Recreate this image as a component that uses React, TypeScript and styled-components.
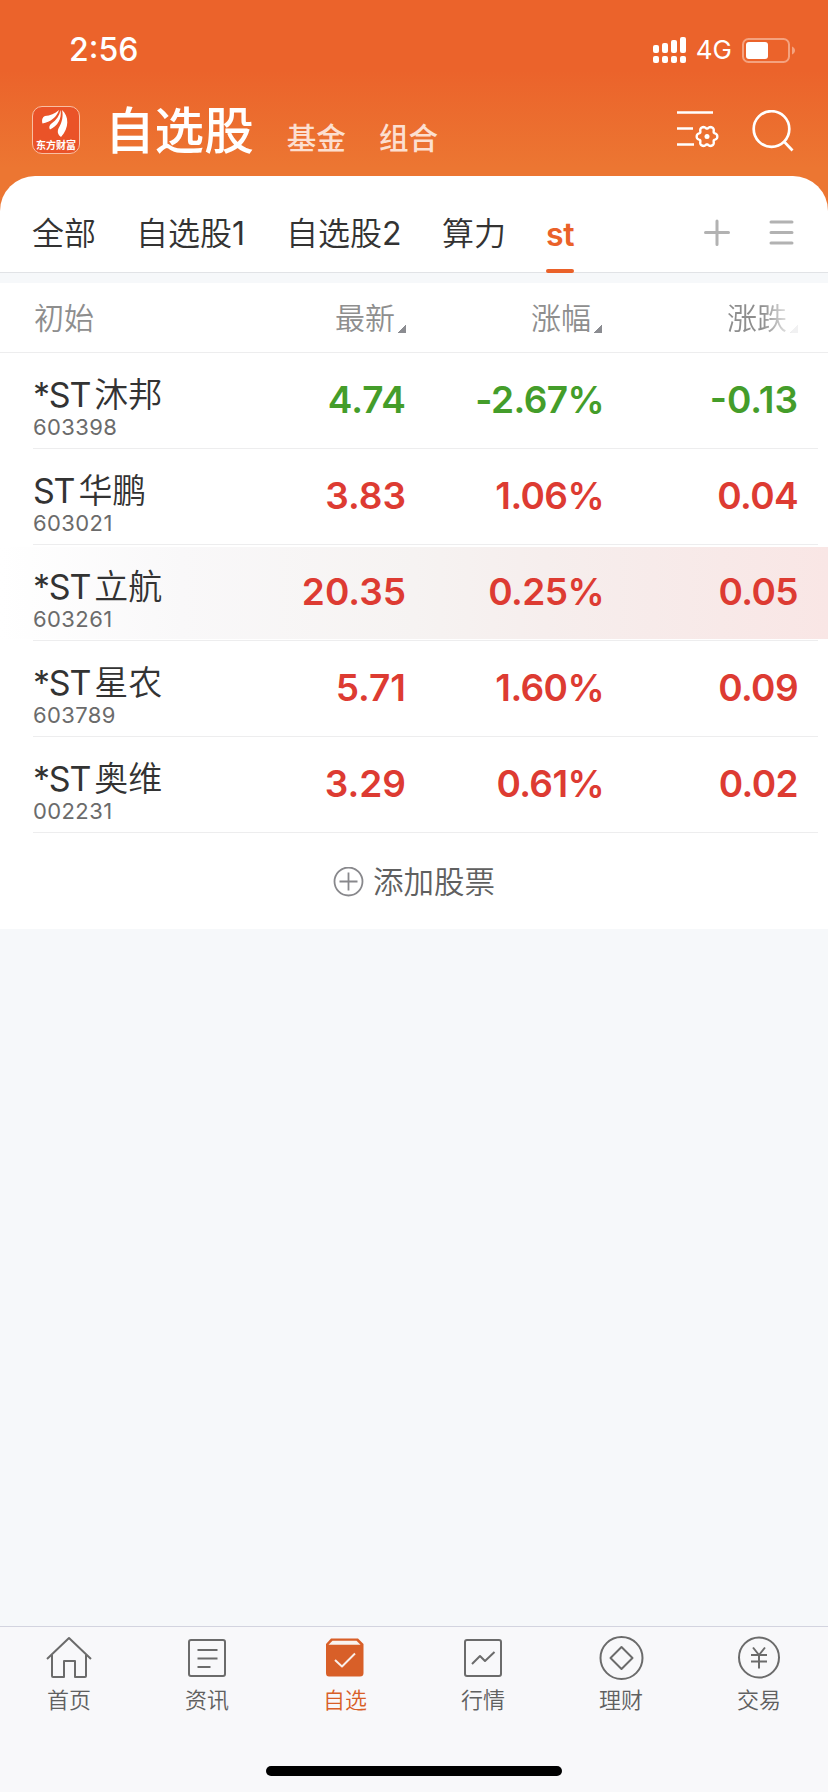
import React from "react";
import styled, { createGlobalStyle } from "styled-components";

const ORANGE = "#ea6129";
const RED = "#dd3b32";
const GREEN = "#449d2a";

const Global = createGlobalStyle`
  * { box-sizing: border-box; }
  body {
    margin: 0;
    background: #f6f7f9;
    font-family: Inter, "Noto Sans CJK SC", sans-serif;
    color: #333;
  }
  svg { display: block; flex: none; }
`;

const Screen = styled.div`
  width: 828px;
  height: 1792px;
  display: flex;
  flex-direction: column;
  background: #f6f8fa;
  overflow: hidden;
`;

const Top = styled.header`
  background: linear-gradient(#eb632b 0, #eb632b 70px, #ec7632 168px, #ec7632 100%);
`;

const StatusBar = styled.div`
  height: 98px;
  padding: 2px 33px 0 69px;
  display: flex;
  align-items: center;
  color: #fff;
`;

const Clock = styled.span`
  flex: 1;
  font-size: 32px;
  line-height: 40px;
  font-weight: 550;
`;

const Network = styled.span`
  margin: 0 10px 0 9px;
  font-size: 26px;
  line-height: 32px;
`;

const TitleBar = styled.div`
  height: 78px;
  padding: 0 33px 0 32px;
  display: flex;
  align-items: flex-start;
`;

const LogoBox = styled.div`
  width: 48px;
  height: 48px;
  margin-top: 8px;
  border: 1px solid #f9bfa3;
  border-radius: 10px;
  background: #ea5328;
  display: flex;
  flex-direction: column;
  align-items: center;
  overflow: hidden;
`;

const LogoText = styled.span`
  color: #fff;
  font: 600 10px/14px "Noto Sans CJK SC", sans-serif;
  white-space: nowrap;
`;

const Title = styled.h1`
  margin: -7px 0 0 25px;
  font-family: "Noto Sans CJK SC", sans-serif;
  font-size: 49.6px;
  line-height: 72px;
  font-weight: 500;
  color: #fff;
  white-space: nowrap;
`;

const TopLink = styled.span<{ $gap: number }>`
  margin: 17px 0 0 ${(p) => p.$gap}px;
  font-family: "Noto Sans CJK SC", sans-serif;
  font-size: 29.6px;
  line-height: 44px;
  color: #fcdfd0;
  font-weight: 500;
`;

const TopIcons = styled.div`
  margin: 12px 0 0 auto;
  display: flex;
  gap: 32px;
`;

const Tabs = styled.nav`
  height: 97px;
  padding: 0 34px 0 32px;
  border-bottom: 1px solid #e1e3e6;
  border-radius: 35px 35px 0 0;
  background: #fff;
  display: flex;
`;

const Tab = styled.span<{ $active?: boolean; $width: number }>`
  width: ${(p) => p.$width}px;
  height: 97px;
  padding-top: ${(p) => (p.$active ? 36 : 35)}px;
  position: relative;
  font-size: 32px;
  line-height: 46px;
  white-space: nowrap;
  color: ${(p) => (p.$active ? ORANGE : "#333")};
  font-weight: ${(p) => (p.$active ? 600 : 350)};
  letter-spacing: ${(p) => (p.$active ? "-0.4px" : "0")};
`;

const Digit = styled.span`
  font-weight: 400;
`;

const Underline = styled.i`
  position: absolute;
  left: 0;
  bottom: 0;
  width: 28px;
  height: 4px;
  border-radius: 2px;
  background: ${ORANGE};
`;

const TabIcons = styled.div`
  margin: 43px 0 0 auto;
  display: flex;
  gap: 38px;
`;

const Table = styled.section`
  margin-top: 10px;
  background: #fff;
`;

const GRID = "1fr 196px 196px";

const HeadRow = styled.div`
  height: 70px;
  padding: 0 30px 0 34px;
  border-bottom: 1px solid #ededee;
  display: grid;
  grid-template-columns: ${GRID};
  color: #8e8e8e;
  font-size: 30px;
  font-weight: 350;
  line-height: 70px;
`;

const HeadCell = styled.span<{ $fade?: boolean }>`
  display: flex;
  justify-content: flex-end;
  ${(p) =>
    p.$fade &&
    `-webkit-mask-image: linear-gradient(90deg, #000 calc(100% - 36px), rgba(0,0,0,.12) calc(100% - 6px));
     mask-image: linear-gradient(90deg, #000 calc(100% - 36px), rgba(0,0,0,.12) calc(100% - 6px));`}
`;

const HeadFirst = styled.span`
  display: flex;
  justify-content: space-between;
`;

const SortMark = styled.i`
  width: 8px;
  height: 8px;
  margin: 42px 0 0 3px;
  background: linear-gradient(135deg, transparent 50%, #8b8c91 50%);
`;

const Row = styled.div<{ $flash?: boolean }>`
  height: 96px;
  padding: 3px 0 3px;
  background: ${(p) =>
    p.$flash
      ? "linear-gradient(90deg, #fff 0, #f9f8f9 22%, #f6f3f2 50%, #f6eeed 66%, #f9e6e5 100%) 0 2px / 100% 92px no-repeat"
      : "#fff"};
`;

const RowInner = styled.div`
  height: 93px;
  margin: 0 10px 0 33px;
  padding-right: 20px;
  border-bottom: 1px solid #ededee;
  display: grid;
  grid-template-columns: ${GRID};
`;

const NameCell = styled.div`
  display: flex;
  justify-content: space-between;
`;

const StockName = styled.div`
  padding-top: 16px;
  display: flex;
  font-size: 34px;
  font-weight: 350;
  line-height: 46px;
  white-space: nowrap;
`;

const Prefix = styled.span`
  margin-right: 4px;
  font-weight: 400;
  letter-spacing: -1.2px;
`;

const Code = styled.div`
  margin-top: -3px;
  font-size: 22px;
  line-height: 24px;
  letter-spacing: 0.4px;
  color: #6b6b6b;
`;

const Value = styled.div<{ $down?: boolean; $tight?: boolean }>`
  padding-top: 21px;
  font-size: 37px;
  line-height: 46px;
  font-weight: 600;
  letter-spacing: ${(p) => (p.$tight ? "-0.6px" : "0")};
  text-align: right;
  color: ${(p) => (p.$down ? GREEN : RED)};
`;

const Percent = styled(Value)`
  margin-right: -2px;
`;

const AddRow = styled.div`
  height: 96px;
  padding-top: 2px;
  display: flex;
  align-items: center;
  justify-content: center;
  gap: 9px;
  font-size: 30.5px;
  font-weight: 350;
  line-height: 44px;
  color: #606060;
`;

const BottomBar = styled.footer`
  height: 166px;
  margin-top: auto;
  border-top: 1px solid #d3d4df;
  background: #f8f8fa;
  display: flex;
  flex-direction: column;
  align-items: center;
`;

const NavItems = styled.div`
  width: 100%;
  height: 139px;
  display: grid;
  grid-template-columns: repeat(6, 138px);
`;

const NavItem = styled.div<{ $active?: boolean }>`
  padding-top: 8px;
  display: flex;
  flex-direction: column;
  align-items: center;
  font-size: 22px;
  font-weight: 350;
  line-height: 32px;
  color: ${(p) => (p.$active ? "#d85f28" : "#606060")};
`;

const NavLabel = styled.span`
  margin-top: 3px;
`;

const HomeIndicator = styled.div`
  width: 296px;
  height: 10px;
  border-radius: 5px;
  background: #000;
`;

const Signal = () => (
  <svg width="34" height="27" viewBox="0 0 34 27" fill="#fff">
    <rect x="0" y="8" width="6" height="8" rx="2" />
    <rect x="9" y="6" width="6" height="10" rx="2" />
    <rect x="18" y="3" width="6" height="13" rx="2" />
    <rect x="27" y="0" width="6" height="16" rx="2" />
    {[0, 9, 18, 27].map((x) => (
      <rect key={x} x={x} y="19" width="6" height="7" rx="2" />
    ))}
  </svg>
);

const Battery = () => (
  <svg width="53" height="25" viewBox="0 0 53 25">
    <rect x="1" y="1" width="46" height="23" rx="5.5" fill="none" stroke="#f4a27f" strokeWidth="2" />
    <rect x="4" y="4" width="22" height="17" rx="3" fill="#fff" />
    <path d="M50 8.5c4 1.5 4 6.5 0 8z" fill="#f4a27f" />
  </svg>
);

const LogoMark = () => (
  <svg width="46" height="31" viewBox="0 0 46 31" fill="#fff">
    <path d="M9.500 16.500C8.500 13 9.500 10 12 9C17 8.500 22 7 26 3C24 10 17.500 15 9.500 16.500Z" />
    <path d="M17 22.500C15.500 20.500 16.500 18 18.500 16.500C23.500 13 26.500 8.500 27.500 3C29 12 24.500 19 17 22.500Z" />
    <path d="M28 30C24.500 27.500 24 24 26 20.500C29 15.500 30.500 9 29 3C36 9 36.500 21 28 30Z" />
  </svg>
);

// Six-lobed gear outline around (30, 26.5)
const gearPoints = Array.from({ length: 72 }, (_, i) => {
  const a = (i * Math.PI) / 36;
  const r = 9.3 + 1.25 * Math.cos(6 * a) - 0.25 * Math.cos(12 * a);
  return `${(30 + r * Math.cos(a)).toFixed(2)},${(26.5 + r * Math.sin(a)).toFixed(2)}`;
}).join(" ");

const FilterIcon = () => (
  <svg width="43" height="39" viewBox="0 0 43 39" fill="none" stroke="#fff" strokeWidth="2.7">
    <path d="M0 2.5H36M0 18.5H16M0 34.5H17" />
    <polygon points={gearPoints} strokeWidth="2.4" strokeLinejoin="round" />
    <circle cx="30" cy="26.5" r="2.5" fill="#fff" stroke="none" />
  </svg>
);

const SearchIcon = () => (
  <svg width="43" height="43" viewBox="0 0 43 43" fill="none" stroke="#fff" strokeWidth="2.7">
    <circle cx="19.5" cy="19" r="17.8" />
    <path d="M31.5 31L40.500 40.500" />
  </svg>
);

const PlusIcon = () => (
  <svg width="28" height="28" viewBox="0 0 28 28" stroke="#b2b2b2" strokeWidth="3" strokeLinecap="round">
    <path d="M2.5 13.5H25.5M14 2V25.5" />
  </svg>
);

const MenuIcon = () => (
  <svg width="25" height="28" viewBox="0 0 25 28" stroke="#b2b2b2" strokeWidth="3" strokeLinecap="round">
    <path d="M2 3H23M2 13.5H23M2 24H23" />
  </svg>
);

const CirclePlus = () => (
  <svg width="31" height="31" viewBox="0 0 31 31" fill="none" stroke="#88888c" strokeWidth="1.8">
    <circle cx="15.5" cy="14.5" r="14" />
    <path d="M6.5 14.5H24.5M15.5 5.5V23.5" />
  </svg>
);

const NavSvg = ({ children }: { children: React.ReactNode }) => (
  <svg width="46" height="46" viewBox="0 0 46 46" fill="none" stroke="#6b6b6b" strokeWidth="2" strokeLinejoin="round">
    {children}
  </svg>
);

const navItems = [
  {
    label: "首页",
    icon: (
      <NavSvg>
        <path d="M1 24L23 3L45 24M6 20V41Q6 42 7 42H18V26H29V42H39Q40 42 40 41V20" />
      </NavSvg>
    ),
  },
  {
    label: "资讯",
    icon: (
      <NavSvg>
        <rect x="5" y="5" width="36" height="36" rx="2" />
        <path d="M13.5 15H33.5M13.5 23.5H33.5M13.5 32H26.5" />
      </NavSvg>
    ),
  },
  {
    label: "自选",
    active: true,
    icon: (
      <NavSvg>
        <path d="M4 9L9 3.5H36L41.5 9V38Q41.5 41.5 38 41.5H7Q4 41.5 4 38Z" fill="#d85f28" stroke="none" />
        <path d="M6.5 9.8L10.500 5.800H34.500L38.500 9.800Z" fill="#f9f3ef" stroke="none" />
        <path d="M13 25L20 31.5L33 18.5" stroke="#f9eee8" />
      </NavSvg>
    ),
  },
  {
    label: "行情",
    icon: (
      <NavSvg>
        <rect x="5" y="5" width="36" height="36" rx="2" />
        <path d="M12 29L20 21L25 26L34.5 17" />
      </NavSvg>
    ),
  },
  {
    label: "理财",
    icon: (
      <NavSvg>
        <circle cx="23.5" cy="23" r="21" />
        <path d="M23.5 12L34.5 23L23.5 34L12.5 23Z" />
      </NavSvg>
    ),
  },
  {
    label: "交易",
    icon: (
      <NavSvg>
        <circle cx="23" cy="22.5" r="20" />
        <path d="M17 12.5L23 20L29 12.5M15 20H31M15 26.5H31M23 20V33.5" />
      </NavSvg>
    ),
  },
];

const stocks = [
  { prefix: "*ST", name: "沐邦", code: "603398", price: "4.74", pct: "-2.67%", diff: "-0.13", down: true },
  { prefix: "ST", name: "华鹏", code: "603021", price: "3.83", pct: "1.06%", diff: "0.04" },
  { prefix: "*ST", name: "立航", code: "603261", price: "20.35", pct: "0.25%", diff: "0.05", flash: true },
  { prefix: "*ST", name: "星农", code: "603789", price: "5.71", pct: "1.60%", diff: "0.09" },
  { prefix: "*ST", name: "奥维", code: "002231", price: "3.29", pct: "0.61%", diff: "0.02" },
];

export default function App() {
  return (
    <Screen>
      <Global />
      <Top>
        <StatusBar>
          <Clock>2:56</Clock>
          <Signal />
          <Network>4G</Network>
          <Battery />
        </StatusBar>
        <TitleBar>
          <LogoBox>
            <LogoMark />
            <LogoText>东方财富</LogoText>
          </LogoBox>
          <Title>自选股</Title>
          <TopLink $gap={33}>基金</TopLink>
          <TopLink $gap={33}>组合</TopLink>
          <TopIcons>
            <FilterIcon />
            <SearchIcon />
          </TopIcons>
        </TitleBar>
        <Tabs>
          <Tab $width={104}>全部</Tab>
          <Tab $width={150}>
            自选股<Digit>1</Digit>
          </Tab>
          <Tab $width={156}>
            自选股<Digit>2</Digit>
          </Tab>
          <Tab $width={104}>算力</Tab>
          <Tab $width={28} $active>
            st
            <Underline />
          </Tab>
          <TabIcons>
            <PlusIcon />
            <MenuIcon />
          </TabIcons>
        </Tabs>
      </Top>
      <Table>
        <HeadRow>
          <HeadFirst>
            <span>初始</span>
            <HeadCell>
              最新
              <SortMark />
            </HeadCell>
          </HeadFirst>
          <HeadCell>
            涨幅
            <SortMark />
          </HeadCell>
          <HeadCell $fade>
            涨跌
            <SortMark />
          </HeadCell>
        </HeadRow>
        {stocks.map((s) => (
          <Row key={s.code} $flash={s.flash}>
            <RowInner>
              <NameCell>
                <div>
                  <StockName>
                    <Prefix>{s.prefix}</Prefix>
                    {s.name}
                  </StockName>
                  <Code>{s.code}</Code>
                </div>
                <Value $down={s.down}>{s.price}</Value>
              </NameCell>
              <Percent $down={s.down} $tight>
                {s.pct}
              </Percent>
              <Value $down={s.down} $tight={!s.down}>
                {s.diff}
              </Value>
            </RowInner>
          </Row>
        ))}
        <AddRow>
          <CirclePlus />
          添加股票
        </AddRow>
      </Table>
      <BottomBar>
        <NavItems>
          {navItems.map((n) => (
            <NavItem key={n.label} $active={n.active}>
              {n.icon}
              <NavLabel>{n.label}</NavLabel>
            </NavItem>
          ))}
        </NavItems>
        <HomeIndicator />
      </BottomBar>
    </Screen>
  );
}
